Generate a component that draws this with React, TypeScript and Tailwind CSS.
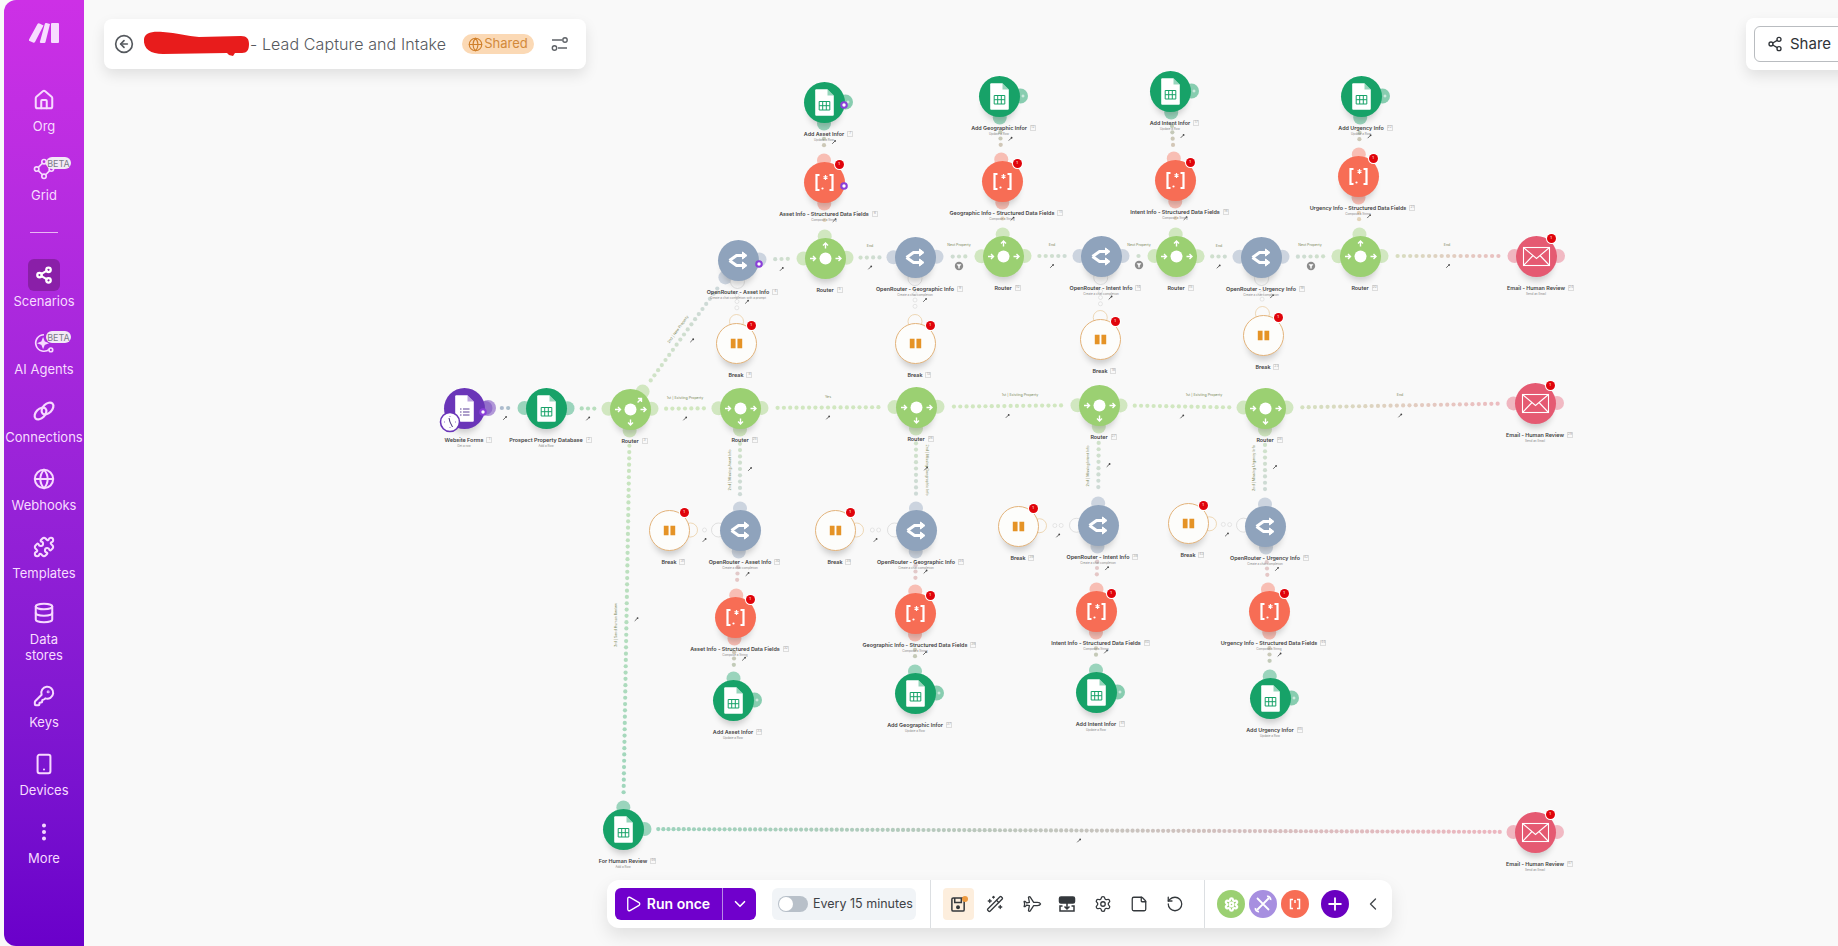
import type { ReactNode } from 'react';
import {
  ChevronDown,
  ChevronLeft,
  CircleArrowLeft,
  Database,
  EllipsisVertical,
  Globe,
  House,
  KeyRound,
  Plane,
  Play,
  Plus,
  Puzzle,
  RotateCcw,
  Settings,
  Share2,
  Smartphone,
  StickyNote,
  WandSparkles,
} from 'lucide-react';

type Kind = 'form' | 'sheet' | 'router' | 'or' | 'json' | 'break' | 'email';

interface FlowNode {
  id: string;
  kind: Kind;
  x: number;
  y: number;
  label?: string;
  sub?: string;
  badge?: boolean;
  arrows?: number[];
  plus?: boolean;
}

const COLORS: Record<Kind, string> = {
  form: '#6a35b8',
  sheet: '#17a268',
  router: '#9bd072',
  or: '#8fa3bc',
  json: '#f76d55',
  break: '#c9c9c9',
  email: '#e55a72',
};

const UP = [180, 0, -90];
const DOWN = [180, 0, 90];

const NODES: FlowNode[] = [
  { id: 'forms', kind: 'form', x: 464, y: 408, label: 'Website Forms', sub: 'Get a row' },
  { id: 'prospect', kind: 'sheet', x: 546, y: 408, label: 'Prospect Property Database', sub: 'Add a Row' },
  { id: 'r0', kind: 'router', x: 630, y: 409, label: 'Router', arrows: [180, 0, -45, 90] },

  // top branch
  { id: 'tOr1', kind: 'or', x: 738, y: 260, label: 'OpenRouter - Asset Info', sub: 'Create a chat completion with a prompt' },
  { id: 'tR1', kind: 'router', x: 825, y: 258, label: 'Router', arrows: UP },
  { id: 'tJ1', kind: 'json', x: 824, y: 182, label: 'Asset Info - Structured Data Fields', sub: 'Compose a String', badge: true },
  { id: 'tA1', kind: 'sheet', x: 824, y: 102, label: 'Add Asset Infor', sub: 'Update a Row', plus: true },
  { id: 'tB1', kind: 'break', x: 736, y: 343, label: 'Break', badge: true },
  { id: 'tOr2', kind: 'or', x: 915, y: 257, label: 'OpenRouter - Geographic Info', sub: 'Create a chat completion' },
  { id: 'tR2', kind: 'router', x: 1003, y: 256, label: 'Router', arrows: UP },
  { id: 'tJ2', kind: 'json', x: 1002, y: 181, label: 'Geographic Info - Structured Data Fields', sub: 'Compose a String', badge: true },
  { id: 'tA2', kind: 'sheet', x: 999, y: 96, label: 'Add Geographic Infor', sub: 'Update a Row', plus: true },
  { id: 'tB2', kind: 'break', x: 915, y: 343, label: 'Break', badge: true },
  { id: 'tOr3', kind: 'or', x: 1101, y: 256, label: 'OpenRouter - Intent Info', sub: 'Create a chat completion' },
  { id: 'tR3', kind: 'router', x: 1176, y: 256, label: 'Router', arrows: UP },
  { id: 'tJ3', kind: 'json', x: 1175, y: 180, label: 'Intent Info - Structured Data Fields', sub: 'Compose a String', badge: true },
  { id: 'tA3', kind: 'sheet', x: 1170, y: 91, label: 'Add Intent Infor', sub: 'Update a Row', plus: true },
  { id: 'tB3', kind: 'break', x: 1100, y: 339, label: 'Break', badge: true },
  { id: 'tOr4', kind: 'or', x: 1261, y: 257, label: 'OpenRouter - Urgency Info', sub: 'Create a chat completion' },
  { id: 'tR4', kind: 'router', x: 1360, y: 256, label: 'Router', arrows: UP },
  { id: 'tJ4', kind: 'json', x: 1358, y: 176, label: 'Urgency Info - Structured Data Fields', sub: 'Compose a String', badge: true },
  { id: 'tA4', kind: 'sheet', x: 1361, y: 96, label: 'Add Urgency Info', sub: 'Update a Row', plus: true },
  { id: 'tB4', kind: 'break', x: 1263, y: 335, label: 'Break', badge: true },
  { id: 'tE', kind: 'email', x: 1536, y: 256, label: 'Email - Human Review', sub: 'Send an Email', badge: true },

  // middle row
  { id: 'm1', kind: 'router', x: 740, y: 408, label: 'Router', arrows: DOWN },
  { id: 'm2', kind: 'router', x: 916, y: 407, label: 'Router', arrows: DOWN },
  { id: 'm3', kind: 'router', x: 1099, y: 405, label: 'Router', arrows: DOWN },
  { id: 'm4', kind: 'router', x: 1265, y: 408, label: 'Router', arrows: DOWN },
  { id: 'mE', kind: 'email', x: 1535, y: 403, label: 'Email - Human Review', sub: 'Send an Email', badge: true },

  // lower branches
  { id: 'bOr1', kind: 'or', x: 740, y: 530, label: 'OpenRouter - Asset Info', sub: 'Create a chat completion' },
  { id: 'bB1', kind: 'break', x: 669, y: 530, label: 'Break', badge: true },
  { id: 'bJ1', kind: 'json', x: 735, y: 617, label: 'Asset Info - Structured Data Fields', sub: 'Compose a String', badge: true },
  { id: 'bA1', kind: 'sheet', x: 733, y: 700, label: 'Add Asset Infor', sub: 'Update a Row', plus: true },
  { id: 'bOr2', kind: 'or', x: 916, y: 530, label: 'OpenRouter - Geographic Info', sub: 'Create a chat completion' },
  { id: 'bB2', kind: 'break', x: 835, y: 530, label: 'Break', badge: true },
  { id: 'bJ2', kind: 'json', x: 915, y: 613, label: 'Geographic Info - Structured Data Fields', sub: 'Compose a String', badge: true },
  { id: 'bA2', kind: 'sheet', x: 915, y: 693, label: 'Add Geographic Infor', sub: 'Update a Row', plus: true },
  { id: 'bOr3', kind: 'or', x: 1098, y: 525, label: 'OpenRouter - Intent Info', sub: 'Create a chat completion' },
  { id: 'bB3', kind: 'break', x: 1018, y: 526, label: 'Break', badge: true },
  { id: 'bJ3', kind: 'json', x: 1096, y: 611, label: 'Intent Info - Structured Data Fields', sub: 'Compose a String', badge: true },
  { id: 'bA3', kind: 'sheet', x: 1096, y: 692, label: 'Add Intent Infor', sub: 'Update a Row', plus: true },
  { id: 'bOr4', kind: 'or', x: 1265, y: 526, label: 'OpenRouter - Urgency Info', sub: 'Create a chat completion' },
  { id: 'bB4', kind: 'break', x: 1188, y: 523, label: 'Break', badge: true },
  { id: 'bJ4', kind: 'json', x: 1269, y: 611, label: 'Urgency Info - Structured Data Fields', sub: 'Compose a String', badge: true },
  { id: 'bA4', kind: 'sheet', x: 1270, y: 698, label: 'Add Urgency Infor', sub: 'Update a Row', plus: true },

  // bottom row
  { id: 'human', kind: 'sheet', x: 623, y: 829, label: 'For Human Review', sub: 'Add a Row' },
  { id: 'bE', kind: 'email', x: 1535, y: 832, label: 'Email - Human Review', sub: 'Send an Email', badge: true },
];

const EDGES: [string, string, number?][] = [
  ['forms', 'prospect'], ['prospect', 'r0'], ['r0', 'tOr1'], ['r0', 'm1'], ['r0', 'human'], ['human', 'bE', 5.1],
  ['tOr1', 'tR1'], ['tR1', 'tOr2'], ['tOr2', 'tR2'], ['tR2', 'tOr3'], ['tOr3', 'tR3'], ['tR3', 'tOr4'], ['tOr4', 'tR4'], ['tR4', 'tE'],
  ['tR1', 'tJ1'], ['tJ1', 'tA1'], ['tR2', 'tJ2'], ['tJ2', 'tA2'], ['tR3', 'tJ3'], ['tJ3', 'tA3'], ['tR4', 'tJ4'], ['tJ4', 'tA4'],
  ['tOr1', 'tB1'], ['tOr2', 'tB2'], ['tOr3', 'tB3'], ['tOr4', 'tB4'],
  ['m1', 'm2'], ['m2', 'm3'], ['m3', 'm4'], ['m4', 'mE'],
  ['m1', 'bOr1'], ['bOr1', 'bB1'], ['bOr1', 'bJ1'], ['bJ1', 'bA1'],
  ['m2', 'bOr2'], ['bOr2', 'bB2'], ['bOr2', 'bJ2'], ['bJ2', 'bA2'],
  ['m3', 'bOr3'], ['bOr3', 'bB3'], ['bOr3', 'bJ3'], ['bJ3', 'bA3'],
  ['m4', 'bOr4'], ['bOr4', 'bB4'], ['bOr4', 'bJ4'], ['bJ4', 'bA4'],
];

const ROUTE_LABELS: { x: number; y: number; text: string; rotate?: number }[] = [
  { x: 685, y: 399, text: '1st | Existing Property' },
  { x: 828, y: 398, text: 'Yes' },
  { x: 1020, y: 396, text: '1st | Existing Property' },
  { x: 1204, y: 396, text: '1st | Existing Property' },
  { x: 1400, y: 396, text: 'End' },
  { x: 870, y: 247, text: 'End' },
  { x: 959, y: 246, text: 'Next Property' },
  { x: 1052, y: 246, text: 'End' },
  { x: 1139, y: 246, text: 'Next Property' },
  { x: 1219, y: 247, text: 'End' },
  { x: 1310, y: 246, text: 'Next Property' },
  { x: 1447, y: 246, text: 'End' },
  { x: 679, y: 330, text: '2nd | New Property', rotate: -54 },
  { x: 731, y: 470, text: '2nd | Missing Asset Info', rotate: -90 },
  { x: 926, y: 470, text: '2nd | Missing Geographic Info', rotate: 90 },
  { x: 1089, y: 466, text: '2nd | Missing Intent Info', rotate: -90 },
  { x: 1255, y: 468, text: '2nd | Missing Urgency Info', rotate: -90 },
  { x: 617, y: 625, text: '3rd | Send Human Review', rotate: -90 },
];

const FILTERS = [
  { x: 959, y: 266 },
  { x: 1139, y: 265 },
  { x: 1311, y: 266 },
];

const BOT_MARKS = [
  { x: 483, y: 412 },
  { x: 759, y: 264 },
  { x: 844, y: 186 },
  { x: 844, y: 105 },
];

const R = 20.5;
const byId = Object.fromEntries(NODES.map((n) => [n.id, n]));

function mixHex(a: string, b: string, t: number) {
  const ch = (hex: string, i: number) => parseInt(hex.slice(1 + i * 2, 3 + i * 2), 16);
  const out = [0, 1, 2].map((i) => Math.round(ch(a, i) * (1 - t) + ch(b, i) * t));
  return `rgb(${out[0]},${out[1]},${out[2]})`;
}

function Edge({ from, to, step = 6.3 }: { from: FlowNode; to: FlowNode; step?: number }) {
  const dx = to.x - from.x;
  const dy = to.y - from.y;
  const len = Math.hypot(dx, dy);
  const ux = dx / len;
  const uy = dy / len;
  const hollow = from.kind === 'break' || to.kind === 'break';
  const room = len - 70;
  const count = room > 0 ? Math.floor(room / step) + 1 : 0;
  const lead = 35 + (room - (count - 1) * step) / 2;
  const dots = Array.from({ length: count }, (_, i) => lead + i * step);
  const ear = (n: FlowNode, sx: number, sy: number) =>
    hollow ? (
      <circle cx={n.x + sx * (R + 1)} cy={n.y + sy * (R + 1)} r={7} fill="#fafafa" stroke={n.kind === 'break' ? '#e8c89a' : '#d4d4d4'} strokeWidth={0.7} />
    ) : (
      <circle cx={n.x + sx * (R + 1)} cy={n.y + sy * (R + 1)} r={7} fill={COLORS[n.kind]} opacity={0.42} />
    );
  const midX = (from.x + to.x) / 2 + Math.abs(uy) * 10;
  const midY = (from.y + to.y) / 2 + Math.abs(ux) * 10;
  return (
    <g>
      {ear(from, ux, uy)}
      {ear(to, -ux, -uy)}
      {dots.map((d) =>
        hollow ? (
          <circle key={d} cx={from.x + ux * d} cy={from.y + uy * d} r={2} fill="#fafafa" stroke="#d6d6d6" strokeWidth={0.6} />
        ) : (
          <circle
            key={d}
            cx={from.x + ux * d}
            cy={from.y + uy * d}
            r={2.1}
            fill={mixHex(COLORS[from.kind], COLORS[to.kind], d / len)}
            opacity={0.42}
          />
        ),
      )}
      <g transform={`translate(${midX} ${midY})`}>
        <path d="M-1.8 1.8 L0.8 -0.8" stroke="#444" strokeWidth={0.8} />
        <circle cx={1.1} cy={-1.1} r={0.9} fill="#444" />
      </g>
    </g>
  );
}

function RouterIcon({ arrows }: { arrows: number[] }) {
  return (
    <g>
      <circle r={6} fill="#fff" />
      {arrows.map((deg) => (
        <g key={deg} transform={`rotate(${deg})`}>
          {deg === 180 ? (
            <path d="M15.5 0 H10 M12.5 -2.5 L10 0 L12.5 2.5" stroke="#fff" strokeWidth={1.4} fill="none" />
          ) : (
            <path d="M10 0 H15.5 M13 -2.5 L15.5 0 L13 2.5" stroke="#fff" strokeWidth={1.4} fill="none" />
          )}
        </g>
      ))}
    </g>
  );
}

function Doc({ color, children }: { color: string; children: ReactNode }) {
  return (
    <g>
      <path d="M-8.3 -13.3 H3 L9.3 -7 V12.3 a1 1 0 0 1 -1 1 H-8.3 a1 1 0 0 1 -1 -1 V-12.3 a1 1 0 0 1 1 -1 Z" fill="#fff" />
      <path d="M3 -13.3 L9.3 -7 H3 Z" fill={color} opacity={0.45} />
      {children}
    </g>
  );
}

function NodeIcon({ node }: { node: FlowNode }) {
  switch (node.kind) {
    case 'sheet':
      return (
        <Doc color="#17a268">
          <path d="M-5.3 -1 H5.3 V7.5 H-5.3 Z M-5.3 3.2 H5.3 M-1.8 -1 V7.5 M1.8 -1 V7.5" fill="none" stroke="#17a268" strokeWidth={1} />
        </Doc>
      );
    case 'form':
      return (
        <Doc color="#6a35b8">
          <path d="M-1.5 0.5 H5 M-1.5 3.5 H5 M-1.5 6.5 H5 M-4.5 0.5 H-3 M-4.5 3.5 H-3 M-4.5 6.5 H-3" stroke="#4b2a8c" strokeWidth={0.9} />
        </Doc>
      );
    case 'router':
      return <RouterIcon arrows={node.arrows ?? DOWN} />;
    case 'or':
      return (
        <g fill="none" stroke="#fff" strokeWidth={3}>
          <path d="M-9 0 L-2 -5 H6 M-9 0 L-2 5 H6" />
          <path d="M4 -8.5 L8.5 -5 L4 -1.5 Z M4 1.5 L8.5 5 L4 8.5 Z" fill="#fff" strokeWidth={1} />
        </g>
      );
    case 'json':
      return (
        <g fill="none" stroke="#fff">
          <path d="M-5 -7.5 H-8 V7.5 H-5 M5 -7.5 H8 V7.5 H5" strokeWidth={2.2} />
          <path d="M1 -7.5 V-2.5 M-1 -6 L3 -4 M3 -6 L-1 -4" strokeWidth={1.2} />
          <circle cx={-2} cy={6} r={1.1} fill="#fff" stroke="none" />
        </g>
      );
    case 'break':
      return (
        <g fill="#e59326">
          <rect x={-6} y={-5} width={5} height={10} />
          <rect x={1} y={-5} width={5} height={10} />
        </g>
      );
    case 'email':
      return (
        <g fill="none" stroke="#fff" strokeWidth={1.1}>
          <rect x={-13} y={-9} width={26} height={18} />
          <path d="M-13 -9 L0 2 L13 -9 M-13 9 L-3.5 -1 M13 9 L3.5 -1" />
        </g>
      );
  }
}

function FlowNodeView({ node, index }: { node: FlowNode; index: number }) {
  const isBreak = node.kind === 'break';
  return (
    <div className="absolute" style={{ left: node.x, top: node.y }}>
      <div
        className={`absolute left-[-20.5px] top-[-20.5px] flex h-[41px] w-[41px] items-center justify-center rounded-full shadow-[0_8px_6px_-4px_rgba(0,0,0,0.18)] ${
          isBreak ? 'border border-[#e3b37a] bg-[#fdfdfb]' : ''
        }`}
        style={isBreak ? undefined : { backgroundColor: COLORS[node.kind] }}
      >
        <svg width={41} height={41} viewBox="-20.5 -20.5 41 41">
          <NodeIcon node={node} />
        </svg>
      </div>
      {node.badge && (
        <span className="absolute left-[10.5px] top-[-22.5px] flex h-[9px] w-[9px] items-center justify-center rounded-full bg-[#e0040b] text-[4px] leading-none text-white ring-1 ring-white">
          1
        </span>
      )}
      {node.label && (
        <div className="absolute left-[-100px] top-[28.5px] flex w-[200px] flex-col items-center">
          <span className="relative block whitespace-nowrap text-[5.4px] font-semibold leading-[7px] text-[#444]">
            {node.label}
            <span className="absolute left-full top-[0.5px] ml-[3px] flex h-[6px] w-[6px] items-center justify-center border border-[#ddd] text-[3.5px] font-normal leading-none text-[#aaa]">
              {index}
            </span>
          </span>
          {node.sub && <span className="block whitespace-nowrap text-[3px] leading-[4px] text-[#888]">{node.sub}</span>}
        </div>
      )}
    </div>
  );
}

function Diagram() {
  return (
    <div className="absolute inset-0">
      <svg className="absolute inset-0" width={1838} height={946}>
        {EDGES.map(([a, b, step]) => (
          <Edge key={a + b} from={byId[a]} to={byId[b]} step={step} />
        ))}
        {/* right side ears without a connection */}
        {NODES.filter((n) => n.plus).map((n) => (
          <g key={n.id}>
            <circle cx={n.x + R + 1} cy={n.y} r={7.5} fill={COLORS.sheet} opacity={0.5} />
            <path d={`M${n.x + R + 3.5} ${n.y - 1.5} v3 M${n.x + R + 2} ${n.y} h3`} stroke="#fff" strokeWidth={0.7} />
          </g>
        ))}
        <circle cx={488} cy={408} r={8} fill={COLORS.form} opacity={0.5} />
        <circle cx={1558} cy={256} r={7} fill={COLORS.email} opacity={0.4} />
        <circle cx={1557} cy={403} r={7} fill={COLORS.email} opacity={0.4} />
        <circle cx={1557} cy={832} r={7} fill={COLORS.email} opacity={0.4} />
        {ROUTE_LABELS.map((l) => (
          <text
            key={l.text + l.x}
            x={l.x}
            y={l.y}
            textAnchor="middle"
            fontSize={3.6}
            fill="#7d8a5a"
            transform={l.rotate ? `rotate(${l.rotate} ${l.x} ${l.y})` : undefined}
          >
            {l.text}
          </text>
        ))}
        {FILTERS.map((f) => (
          <g key={f.x} transform={`translate(${f.x} ${f.y})`}>
            <circle r={4.2} fill="#8c8c8c" />
            <path d="M-2.4 -1.8 H2.4 L0.7 0.5 V2.4 H-0.7 V0.5 Z" fill="#fff" />
          </g>
        ))}
      </svg>
      {NODES.map((n, i) => (
        <FlowNodeView key={n.id} node={n} index={i + 1} />
      ))}
      <svg className="absolute inset-0" width={1838} height={946}>
        {/* schedule clock on the trigger */}
        <g transform="translate(450 422)">
          <circle r={9.5} fill="#fff" stroke="#6a35b8" strokeWidth={1.6} />
          <path d="M0 -6 V-5 M0 5 V6 M-6 0 H-5 M5 0 H6" stroke="#6a35b8" strokeWidth={0.7} />
          <path d="M-1 -4 L0 0 L2.5 5" stroke="#43307a" strokeWidth={1} fill="none" />
        </g>
        {BOT_MARKS.map((m) => (
          <g key={m.x + '-' + m.y}>
            <circle cx={m.x} cy={m.y} r={3.8} fill="#8a3fd9" />
            <circle cx={m.x} cy={m.y} r={1.7} fill="#fff" />
          </g>
        ))}
      </svg>
    </div>
  );
}

function BetaPill() {
  return (
    <span className="absolute left-[19px] top-0 flex h-[12px] w-[25px] items-center justify-center rounded-full bg-[#f2e9f6] text-[9px] leading-none text-[#7a7a88]">
      BETA
    </span>
  );
}

function NavItem({ icon, label, height, beta, active }: { icon: ReactNode; label: string; height: string; beta?: boolean; active?: boolean }) {
  return (
    <div className={`flex flex-col items-center ${height}`}>
      <div className="relative flex h-6 w-full items-center justify-center">
        {active && <span className="absolute left-[24px] top-[-4px] h-8 w-8 rounded-md bg-[#8a1fa8]" />}
        <span className="relative">{icon}</span>
        {beta && (
          <span className="absolute left-[23px] top-0 block h-3 w-[44px]">
            <BetaPill />
          </span>
        )}
      </div>
      <div className="mt-[6px] whitespace-pre-line text-center text-[13px] leading-4 text-[#f7dcff]">{label}</div>
    </div>
  );
}

function Sidebar() {
  const ic = 'h-[22px] w-[22px] text-[#f7d9ff]';
  return (
    <aside className="ml-1 flex h-[946px] w-20 shrink-0 flex-col rounded-l-xl bg-gradient-to-b from-[#cd30e6] to-[#6a00ca] pt-[23px]">
      <svg className="mx-auto mb-[45px] h-5 w-[30px]" viewBox="0 0 30 20" fill="#f7dcff">
        <path d="M0 16.5 L8.5 1 a1.5 1.5 0 0 1 2 -.6 L14.5 2.4 L6 19 a1.5 1.5 0 0 1 -2 .6 L.6 18 a1 1 0 0 1 -.6 -1.5 Z" />
        <path d="M11 18.5 L15.8 1 a1.3 1.3 0 0 1 1.5 -.9 L21 .9 L16.5 19 a1.2 1.2 0 0 1 -1.2 1 H12 a1 1 0 0 1 -1 -1.5 Z" />
        <path d="M22 1 a1 1 0 0 1 1 -1 H29 a1 1 0 0 1 1 1 V19 a1 1 0 0 1 -1 1 H23 a1 1 0 0 1 -1 -1 Z" />
      </svg>
      <NavItem height="h-[69px]" label="Org" icon={<House className={ic} strokeWidth={2.2} />} />
      <NavItem
        height="h-[68px]"
        label="Grid"
        beta
        icon={
          <svg className={ic} viewBox="0 0 24 24" fill="none" stroke="currentColor" strokeWidth={1.8}>
            <circle cx={12} cy={4} r={2.4} />
            <circle cx={4} cy={12} r={2.4} />
            <circle cx={20} cy={12} r={2.4} />
            <circle cx={12} cy={20} r={2.4} />
            <path d="M6 10 L10 6 M14 6 L18 10 M6 14 L10 18 M14 18 L18 14" />
          </svg>
        }
      />
      <div className="mx-auto mb-[30px] mt-[7px] h-px w-7 bg-[#e9b7f3]" />
      <NavItem height="h-[68px]" label="Scenarios" active icon={<Share2 className="h-[18px] w-[18px] text-white" strokeWidth={3} />} />
      <NavItem
        height="h-[68px]"
        label="AI Agents"
        beta
        icon={
          <svg className={ic} viewBox="0 0 24 24" fill="none" stroke="currentColor" strokeWidth={1.8}>
            <path d="M12 3 a9 9 0 1 0 6 15.7" />
            <path d="M11 8 l1.2 3 3 1.2 -3 1.2 -1.2 3 -1.2 -3 -3 -1.2 3 -1.2 Z" fill="currentColor" />
            <circle cx={19.5} cy={19.5} r={2} />
          </svg>
        }
      />
      <NavItem
        height="h-[68px]"
        label="Connections"
        icon={
          <svg className="h-6 w-6 text-[#f7d9ff]" viewBox="0 0 24 24" fill="none" stroke="currentColor" strokeWidth={2.2}>
            <ellipse cx={8.5} cy={14.5} rx={7} ry={4.5} transform="rotate(-45 8.5 14.5)" />
            <ellipse cx={15.5} cy={9.5} rx={7} ry={4.5} transform="rotate(-45 15.5 9.5)" />
          </svg>
        }
      />
      <NavItem height="h-[68px]" label="Webhooks" icon={<Globe className={ic} strokeWidth={2.2} />} />
      <NavItem height="h-[66px]" label="Templates" icon={<Puzzle className={ic} strokeWidth={2.2} />} />
      <NavItem height="h-[83px]" label={'Data\nstores'} icon={<Database className={ic} strokeWidth={2.2} />} />
      <NavItem height="h-[68px]" label="Keys" icon={<KeyRound className={ic} strokeWidth={2.2} />} />
      <NavItem height="h-[68px]" label="Devices" icon={<Smartphone className={ic} strokeWidth={2.2} />} />
      <NavItem height="h-[68px]" label="More" icon={<EllipsisVertical className={ic} strokeWidth={2.4} />} />
    </aside>
  );
}

function HeaderCard() {
  return (
    <div className="absolute left-[104px] top-[19px] flex h-[50px] w-[482px] items-center rounded-lg bg-white pl-[10px] shadow-[0_6px_14px_rgba(0,0,0,0.1)]">
      <CircleArrowLeft className="h-5 w-5 shrink-0 text-[#55595e]" strokeWidth={2} />
      <svg className="ml-[9px] h-[26px] w-[106px] shrink-0" viewBox="0 0 106 26" fill="#e81c1c">
        <path d="M1 8 C2 2 8 0 20 1 C34 2 44 5 56 6 L98 5 C104 5 106 8 106 13 C106 19 104 22 99 22 L92 22 L90 25 L86 24 L84 22 L20 23 C8 23 0 18 1 8 Z" />
      </svg>
      <span className="ml-px w-[197px] shrink-0 whitespace-nowrap text-[16px] font-light tracking-[0.1px] text-[#55595e]">- Lead Capture and Intake</span>
      <span className="ml-[15px] flex h-5 w-[72px] shrink-0 items-center justify-center gap-px rounded-full bg-[#fbd9b5] text-[13px] text-[#d2893a]">
        <Globe className="h-[15px] w-[15px] text-[#cf7f2a]" strokeWidth={1.8} />
        Shared
      </span>
      <svg className="ml-[16px] h-5 w-5 shrink-0 text-[#5f6368]" viewBox="0 0 20 20" fill="none" stroke="currentColor" strokeWidth={1.4}>
        <path d="M2 6 H12 M17 14 H8" />
        <circle cx={15} cy={6} r={2.2} />
        <circle cx={4.5} cy={14} r={2.2} />
      </svg>
    </div>
  );
}

function ShareCard() {
  return (
    <div className="absolute left-[1746px] top-[18px] h-[52px] w-[120px] rounded-l-lg bg-white pl-2 pt-2 shadow-[0_6px_14px_rgba(0,0,0,0.1)]">
      <button className="flex h-9 w-[120px] items-center gap-[7px] rounded-md border border-[#b9bcc0] pl-[12px] text-[15px] text-[#2f3338]">
        <Share2 className="h-4 w-4" strokeWidth={2} />
        Share
      </button>
    </div>
  );
}

function ToolIcon({ children }: { children: ReactNode }) {
  return <span className="flex h-8 w-9 items-center justify-center text-[#34383c]">{children}</span>;
}

function Toolbar() {
  const ic = 'h-[18px] w-[18px]';
  return (
    <div className="absolute left-[607px] top-[880px] flex h-12 w-[785px] items-center rounded-xl bg-white pl-2 shadow-[0_8px_18px_rgba(0,0,0,0.1)]">
      <div className="flex h-8 w-[141px] shrink-0 items-center rounded-md bg-[#7000cc] text-white">
        <span className="flex w-[108px] items-center justify-center gap-[5px] border-r border-[#b98ae6] pr-[3px] text-[14px] font-semibold leading-8">
          <Play className="h-[18px] w-[18px]" strokeWidth={1.8} />
          Run once
        </span>
        <ChevronDown className="mx-auto h-[18px] w-[18px]" strokeWidth={2.2} />
      </div>
      <div className="ml-4 flex h-8 w-[144px] shrink-0 items-center rounded-md bg-[#f1f4f7] pl-[6px] text-[12.5px] text-[#3e4246]">
        <span className="flex h-4 w-[30px] shrink-0 items-center rounded-full bg-[#b8c0c9] pl-px">
          <span className="h-[14px] w-[14px] rounded-full bg-white" />
        </span>
        <span className="ml-[5px] whitespace-nowrap">Every 15 minutes</span>
      </div>
      <span className="ml-[14px] h-full w-px shrink-0 bg-[#dcdfe2]" />
      <span className="relative ml-3 flex h-8 w-[31px] shrink-0 items-center justify-center rounded-sm bg-[#fdeedd] text-[#34383c]">
        <svg className="h-[17px] w-[17px]" viewBox="0 0 18 18" fill="none" stroke="currentColor" strokeWidth={1.6}>
          <rect x={2} y={2} width={13} height={14} rx={1.5} />
          <path d="M5 2 V7 H12 V2" />
          <circle cx={8.5} cy={12} r={1.3} fill="currentColor" />
        </svg>
        <span className="absolute right-[6px] top-[8px] h-[6px] w-[6px] rounded-full bg-[#ee9a3f]" />
      </span>
      <span className="ml-[3px] flex items-center">
        <ToolIcon>
          <WandSparkles className={ic} strokeWidth={1.7} />
        </ToolIcon>
        <ToolIcon>
          <Plane className={`${ic} rotate-45`} strokeWidth={1.7} />
        </ToolIcon>
        <ToolIcon>
          <svg className={ic} viewBox="0 0 18 18" fill="none" stroke="currentColor" strokeWidth={1.5}>
            <rect x={1.5} y={2} width={15} height={6} rx={1.5} fill="currentColor" />
            <path d="M4.5 11 H2 V16 H16 V11 H13.5 M9 8 V13.5 M6.5 11.5 L9 14 L11.5 11.5" />
          </svg>
        </ToolIcon>
        <ToolIcon>
          <Settings className={ic} strokeWidth={1.7} />
        </ToolIcon>
        <ToolIcon>
          <StickyNote className={ic} strokeWidth={1.7} />
        </ToolIcon>
        <ToolIcon>
          <RotateCcw className={ic} strokeWidth={1.7} />
        </ToolIcon>
      </span>
      <span className="ml-[11px] h-full w-px shrink-0 bg-[#dcdfe2]" />
      <span className="ml-3 flex items-center gap-1">
        <span className="flex h-7 w-7 items-center justify-center rounded-full bg-[#9bd072] text-white">
          <Settings className="h-[15px] w-[15px]" strokeWidth={3.5} />
        </span>
        <span className="flex h-7 w-7 items-center justify-center rounded-full bg-[#a78fe0] text-white">
          <svg className="h-[18px] w-[18px]" viewBox="0 0 18 18" fill="none" stroke="currentColor" strokeWidth={1.8}>
            <path d="M3 3 L15 15 M15 3 L3 15" />
            <path d="M13 1.5 a3 3 0 0 1 3.5 3.5 M1.5 13 a3 3 0 0 0 3.5 3.5" />
          </svg>
        </span>
        <span className="flex h-7 w-7 items-center justify-center rounded-full bg-[#f76d55] text-white">
          <svg className="h-[12px] w-[12px]" viewBox="0 0 12 12" fill="none" stroke="currentColor" strokeWidth={1.5}>
            <path d="M4 1.5 H1.5 V10.5 H4 M8 1.5 H10.5 V10.5 H8 M6 2 V5" />
          </svg>
        </span>
      </span>
      <span className="ml-3 flex h-7 w-7 items-center justify-center rounded-full bg-[#6a00c0] text-white">
        <Plus className="h-5 w-5" strokeWidth={2.2} />
      </span>
      <ChevronLeft className="ml-[14px] h-5 w-5 text-[#44484c]" strokeWidth={1.6} />
    </div>
  );
}

export default function App() {
  return (
    <div className="relative flex h-[946px] w-[1838px] overflow-hidden bg-[#f9f9f9] font-['Inter',sans-serif]">
      <Sidebar />
      <Diagram />
      <HeaderCard />
      <ShareCard />
      <Toolbar />
    </div>
  );
}
